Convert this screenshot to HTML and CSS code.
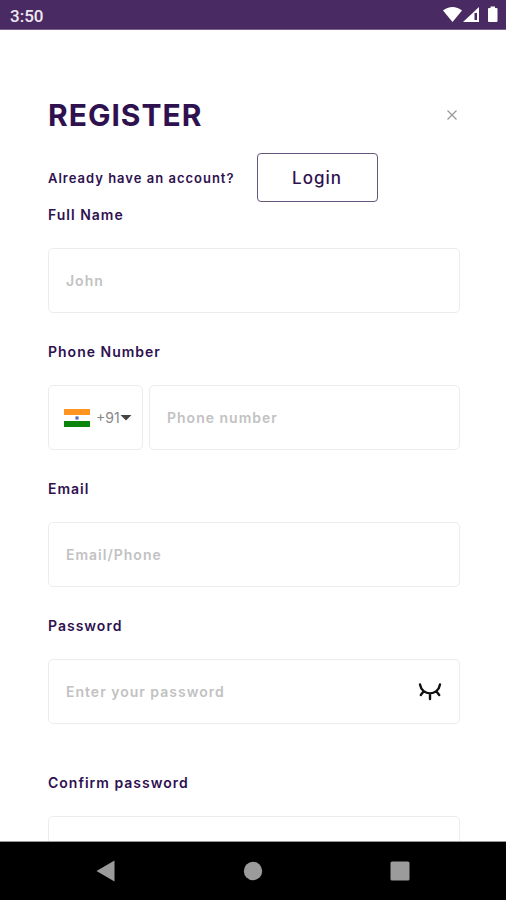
FILE: index.html
```html
<!DOCTYPE html>
<html lang="en">
<head>
<meta charset="utf-8">
<meta name="viewport" content="width=device-width, initial-scale=1">
<title>Register</title>
<link rel="stylesheet" href="styles.css">
</head>
<body>
<header class="status">
  <span class="clock">3:50</span>
  <svg class="status-icons" width="56" height="20" viewBox="0 0 56 20" aria-hidden="true">
    <path d="M0 5.500C5.500 0.800 13.500 0.800 19 5.500L9.500 17Z" fill="#fff"/>
    <path d="M20 17L36 2V17Z" fill="#fff"/>
    <path d="M31.500 8H34V15H31.500Z" fill="#4a2a62"/>
    <path d="M46 3H47.500V1.500H52V3H53.500Q54.500 3 54.500 4V16Q54.500 17 53.500 17H46Q45 17 45 16V4Q45 3 46 3Z" fill="#fff"/>
  </svg>
</header>
<main class="screen">
  <div class="title-row">
    <h1>REGISTER</h1>
    <button class="close" type="button" aria-label="Close">
      <svg width="10" height="10" viewBox="0 0 10 10"><path d="M0.500 0.500L9.500 9.500M9.500 0.500L0.500 9.500" stroke="#999" stroke-width="1.300"/></svg>
    </button>
  </div>
  <div class="login-row">
    <span>Already have an account?</span>
    <button class="login" type="button">Login</button>
  </div>
  <form class="form">
    <div class="field">
      <label for="name">Full Name</label>
      <input class="box" id="name" type="text" placeholder="John">
    </div>
    <div class="field">
      <label for="phone">Phone Number</label>
      <div class="phone">
        <div class="box country">
          <svg class="flag" width="26" height="18" viewBox="0 0 26 18" aria-hidden="true">
            <rect width="26" height="18" fill="#fff"/>
            <rect width="26" height="6" fill="#ff9420"/>
            <rect y="12" width="26" height="6" fill="#0b850b"/>
            <circle cx="13" cy="9" r="2" fill="#7f92cf"/>
            <circle cx="13" cy="9" r="1" fill="#4a64b5"/>
          </svg>
          <select aria-label="Country code"><option>+91</option></select>
          <svg class="caret" width="12" height="6" viewBox="0 0 12 6" aria-hidden="true"><path d="M0.500 0H11.500L6 5.500Z" fill="#444"/></svg>
        </div>
        <input class="box" id="phone" type="tel" placeholder="Phone number">
      </div>
    </div>
    <div class="field">
      <label for="email">Email</label>
      <input class="box" id="email" type="text" placeholder="Email/Phone">
    </div>
    <div class="field">
      <label for="password">Password</label>
      <div class="box secret">
        <input id="password" type="password" placeholder="Enter your password">
        <button class="reveal" type="button" aria-label="Show password">
          <svg width="24" height="18" viewBox="0 0 24 18" fill="none" stroke="#111" stroke-width="2.400" stroke-linecap="round"><path d="M2 1.500C4 13.300 20 13.300 22 1.500M5.500 8.500L2.800 12M12 10.500V16M18.500 8.500L21.200 12"/></svg>
        </button>
      </div>
    </div>
    <div class="field field-confirm">
      <label for="confirm">Confirm password</label>
      <input class="box" id="confirm" type="password">
    </div>
  </form>
</main>
<nav class="system-nav" aria-label="System">
  <button type="button" aria-label="Back"><svg width="20" height="22" viewBox="0 0 20 22"><path d="M0.500 11L18.500 0.500V21.500Z" fill="#9b9b9b"/></svg></button>
  <button type="button" aria-label="Home"><svg width="20" height="20" viewBox="0 0 20 20"><circle cx="10" cy="10" r="9.200" fill="#9b9b9b"/></svg></button>
  <button type="button" aria-label="Recent apps"><svg width="20" height="20" viewBox="0 0 20 20"><rect x="0.500" y="0.500" width="19" height="19" rx="1.500" fill="#9b9b9b"/></svg></button>
</nav>
</body>
</html>
```
FILE: styles.css
```css
* {
  box-sizing: border-box;
}

body {
  margin: 0;
  height: 100vh;
  display: flex;
  flex-direction: column;
  background: #fff;
  color: #2f1150;
  font-family: Inter, "Liberation Sans", sans-serif;
  font-size: 14px;
  font-weight: 600;
  line-height: 20px;
  letter-spacing: 1px;
}

button,
input,
select {
  font: inherit;
  letter-spacing: inherit;
  color: inherit;
}

button {
  padding: 0;
  border: 0;
  background: none;
}

svg {
  display: block;
  flex: none;
}

.status {
  flex: none;
  height: 30px;
  padding: 0 7px 0 10px;
  display: flex;
  align-items: center;
  justify-content: space-between;
  background: #4a2a62;
  border-bottom: 1px solid #7b638d;
}

.clock {
  color: #eee8f2;
  font-family: Roboto, sans-serif;
  font-size: 17px;
  font-weight: 500;
  letter-spacing: 0;
  padding-top: 2px;
}

.screen {
  flex: 1;
  min-height: 0;
  overflow: hidden;
  padding: 65px 46px 0 48px;
  border-bottom: 1px solid #999;
}

.title-row {
  display: flex;
  align-items: center;
  justify-content: space-between;
}

h1 {
  margin: 0;
  font-size: 30px;
  font-weight: 700;
  line-height: 40px;
}

.close {
  padding: 3px;
}

.login-row {
  display: flex;
  gap: 22px;
  align-items: center;
  margin: 18px 0 3px;
  font-size: 13px;
}

.login {
  width: 121px;
  height: 49px;
  border: 1px solid #65577b;
  border-radius: 4px;
  font-size: 17px;
  font-weight: 500;
}

.field {
  display: flex;
  flex-direction: column;
  gap: 23px;
  margin-bottom: 29px;
}

.field-confirm {
  margin-top: 49px;
}

.box {
  width: 100%;
  min-width: 0;
  height: 65px;
  padding: 0 17px;
  border: 1px solid #ececec;
  border-radius: 5px;
  background: #fff;
}

::placeholder {
  color: #c2c2c2;
  opacity: 1;
}

.phone {
  display: flex;
  gap: 6px;
}

.country {
  flex: none;
  width: 95px;
  padding: 0 10px 0 15px;
  display: flex;
  align-items: center;
}

.country select {
  flex: 1;
  min-width: 0;
  margin-left: 6px;
  padding: 0;
  border: 0;
  appearance: none;
  background: none;
  color: #888;
  font-weight: 400;
  letter-spacing: 0;
}

.secret {
  display: flex;
  align-items: center;
}

.secret input {
  flex: 1;
  min-width: 0;
  padding: 0;
  border: 0;
  background: none;
}

.system-nav {
  flex: none;
  height: 58px;
  padding: 0 96px;
  display: flex;
  align-items: center;
  justify-content: space-between;
  background: #000;
}
```
